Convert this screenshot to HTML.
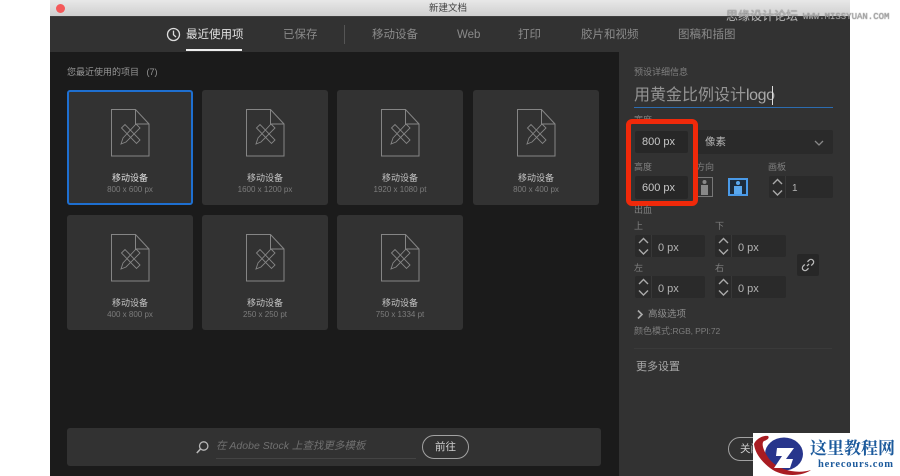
<!DOCTYPE html>
<html><head><meta charset="utf-8"><style>
html,body{margin:0;padding:0}
body{width:900px;height:476px;background:#fff;position:relative;overflow:hidden;font-family:"Liberation Sans","Noto Sans CJK SC",sans-serif}
div,span,svg{position:absolute;white-space:nowrap}
.t{line-height:1}
.card{width:126px;height:115px;background:#323232;border-radius:3px}
.card svg{left:44px;top:19px}
.card .a{left:0;width:126px;text-align:center;top:83px;font-size:9px;color:#c4c4c4;line-height:11px}
.card .b{left:0;width:126px;text-align:center;top:95px;font-size:8px;color:#7c7c7c;line-height:10px}
.tab{font-size:11.5px;color:#8a8a8a;top:28px;line-height:14px}
.lb{font-size:9px;color:#808080;line-height:10px}
.inp{background:#272727;border-radius:2px;height:23px}
.sp{height:22px;background:#2a2a2a;border-radius:2px;width:70px}
.sp .v{left:16px;top:0;width:1px;height:22px;background:#383838}
.sp .x{left:23px;top:2px;line-height:22px;font-size:11px;color:#b4b4b4}
.sp svg{left:3px;top:0}
</style></head><body>
<div style="left:50px;top:0;width:800px;height:476px;background:#1b1b1b"></div>
<div style="left:50px;top:0;width:800px;height:16px;background:linear-gradient(#e8e8e8,#cfcfcf)"></div>
<div style="left:56px;top:3.5px;width:9px;height:9px;border-radius:50%;background:#f4595a"></div>
<div class="t" style="left:429px;top:4px;font-size:9.5px;color:#444">新建文档</div>
<div style="left:50px;top:16px;width:800px;height:36px;background:#323232;border-top:1px solid #3e3e3e;box-sizing:border-box"></div>
<svg style="left:166px;top:27px" width="15" height="15" viewBox="0 0 15 15"><circle cx="7.5" cy="7.5" r="6" fill="none" stroke="#ddd" stroke-width="1.3"/><path d="M7.5 3.6V7.7L10 10" fill="none" stroke="#ddd" stroke-width="1.3"/></svg>
<div class="tab" style="left:186px;color:#e2e2e2">最近使用项</div>
<div style="left:186px;top:49px;width:56px;height:2px;background:#eee"></div>
<div class="tab" style="left:283px">已保存</div>
<div style="left:344px;top:25px;width:1px;height:19px;background:#555"></div>
<div class="tab" style="left:372px">移动设备</div>
<div class="tab" style="left:457px">Web</div>
<div class="tab" style="left:518px">打印</div>
<div class="tab" style="left:581px">胶片和视频</div>
<div class="tab" style="left:678px">图稿和插图</div>
<div class="t" style="left:67px;top:67.5px;font-size:9px;color:#969696">您最近使用的项目&nbsp;&nbsp; (7)</div>

<svg width="0" height="0" style="left:0;top:0"><defs><g id="d" fill="none" stroke="#858585" stroke-width="1"><path d="M.5.5H24.5L38 15V47H.5ZM24.5.5V15H38"/><path d="M10.5 19 14 15.5 29 31 25.5 34.5ZM25 15 29 19 15 33 10 35 12 29Z" stroke-width=".9"/></g></defs></svg>

<div class="card" style="left:67px;top:90px;box-sizing:border-box;border:2px solid #1e6fd0"><svg style="left:42px;top:17px" width="39" height="48"><use href="#d"/></svg><div class="a" style="left:-2px;top:81px;color:#e0e0e0">移动设备</div><div class="b" style="left:-2px;top:93px">800 x 600 px</div></div>
<div class="card" style="left:202px;top:90px"><svg width="39" height="48"><use href="#d"/></svg><div class="a">移动设备</div><div class="b">1600 x 1200 px</div></div>
<div class="card" style="left:337px;top:90px"><svg width="39" height="48"><use href="#d"/></svg><div class="a">移动设备</div><div class="b">1920 x 1080 pt</div></div>
<div class="card" style="left:473px;top:90px"><svg width="39" height="48"><use href="#d"/></svg><div class="a">移动设备</div><div class="b">800 x 400 px</div></div>
<div class="card" style="left:67px;top:215px"><svg width="39" height="48"><use href="#d"/></svg><div class="a">移动设备</div><div class="b">400 x 800 px</div></div>
<div class="card" style="left:202px;top:215px"><svg width="39" height="48"><use href="#d"/></svg><div class="a">移动设备</div><div class="b">250 x 250 pt</div></div>
<div class="card" style="left:337px;top:215px"><svg width="39" height="48"><use href="#d"/></svg><div class="a">移动设备</div><div class="b">750 x 1334 pt</div></div>

<div style="left:67px;top:428px;width:534px;height:38px;background:#323232;border-radius:3px"></div>
<svg style="left:195px;top:440px" width="15" height="15" viewBox="0 0 15 15"><circle cx="8.7" cy="6" r="4.2" fill="none" stroke="#b8b8b8" stroke-width="1.3"/><path d="M5.5 9 1.8 13" stroke="#b8b8b8" stroke-width="1.6"/></svg>
<div class="t" style="left:216px;top:441px;font-size:10.5px;color:#707070;font-style:italic">在 Adobe Stock 上查找更多模板</div>
<div style="left:216px;top:458px;width:200px;height:1px;background:#444"></div>
<div style="left:422px;top:435px;width:47px;height:24px;box-sizing:border-box;border:1px solid #a2a2a2;border-radius:12px;color:#cfcfcf;font-size:10.5px;line-height:22px;text-align:center">前往</div>

<div style="left:619px;top:52px;width:231px;height:424px;background:#323232"></div>
<div class="lb" style="left:634px;top:67px">预设详细信息</div>
<div class="t" style="left:634px;top:86px;font-size:16px;color:#949494;line-height:20px">用黄金比例设计<span style="position:static;color:#a8a8a8;letter-spacing:-.4px">logo</span></div>
<div style="left:772px;top:86px;width:1px;height:19px;background:#ddd"></div>
<div style="left:634px;top:107px;width:199px;height:1px;background:#2c6cb0"></div>
<div class="lb" style="left:634px;top:115px">宽度</div>
<div class="inp" style="left:635px;top:131px;width:53px;height:22px"></div>
<div class="t" style="left:642px;top:137px;font-size:11px;color:#c8c8c8">800 px</div>
<div class="inp" style="left:696px;top:130px;width:137px;height:24px;background:#2a2a2a"></div>
<div class="t" style="left:705px;top:137px;font-size:10.5px;color:#b4b4b4">像素</div>
<svg style="left:813px;top:139px" width="12" height="8"><path d="M2 2 6 6 10 2" fill="none" stroke="#888" stroke-width="1.3"/></svg>
<div class="lb" style="left:634px;top:162px">高度</div>
<div class="inp" style="left:635px;top:176px;width:53px"></div>
<div class="t" style="left:642px;top:183px;font-size:11px;color:#c8c8c8">600 px</div>
<div class="lb" style="left:696px;top:162px">方向</div>
<div style="left:697px;top:177px;width:16px;height:20px;box-sizing:border-box;border:1px solid #777"></div>
<svg style="left:699px;top:179px" width="11" height="16"><circle cx="5.5" cy="3" r="2" fill="#888"/><path d="M2 6H9V16H2Z" fill="#888"/></svg>
<div style="left:728px;top:178px;width:20px;height:18px;box-sizing:border-box;border:2px solid #4a9ae8;background:#1d2c3c"></div>
<svg style="left:732px;top:180px" width="12" height="15"><circle cx="6" cy="3" r="2" fill="#5aa8ee"/><path d="M2 6H10V14H2Z" fill="#5aa8ee"/></svg>
<div class="lb" style="left:768px;top:162px">画板</div>
<div class="sp" style="left:769px;top:176px;width:64px"><div class="v"></div><svg width="12" height="22"><path d="M1 8 5.5 3.5 10 8M1 14.5 5.5 19 10 14.5" fill="none" stroke="#aaa" stroke-width="1.4"/></svg><div class="x" style="font-size:10px">1</div></div>

<div style="left:626px;top:119px;width:72px;height:87px;box-sizing:border-box;border:5px solid #f0290a;border-radius:6px"></div>

<div class="lb" style="left:634px;top:205px">出血</div>
<div class="lb" style="left:634px;top:221px">上</div>
<div class="lb" style="left:715px;top:221px">下</div>
<div class="sp" style="left:635px;top:235px"><div class="v"></div><svg width="12" height="22"><path d="M1 8 5.5 3.5 10 8M1 14.5 5.5 19 10 14.5" fill="none" stroke="#aaa" stroke-width="1.4"/></svg><div class="x">0 px</div></div>
<div class="sp" style="left:715px;top:235px;width:71px"><div class="v"></div><svg width="12" height="22"><path d="M1 8 5.5 3.5 10 8M1 14.5 5.5 19 10 14.5" fill="none" stroke="#aaa" stroke-width="1.4"/></svg><div class="x">0 px</div></div>
<div class="lb" style="left:634px;top:263px">左</div>
<div class="lb" style="left:715px;top:263px">右</div>
<div class="sp" style="left:635px;top:276px"><div class="v"></div><svg width="12" height="22"><path d="M1 8 5.5 3.5 10 8M1 14.5 5.5 19 10 14.5" fill="none" stroke="#aaa" stroke-width="1.4"/></svg><div class="x">0 px</div></div>
<div class="sp" style="left:715px;top:276px;width:71px"><div class="v"></div><svg width="12" height="22"><path d="M1 8 5.5 3.5 10 8M1 14.5 5.5 19 10 14.5" fill="none" stroke="#aaa" stroke-width="1.4"/></svg><div class="x">0 px</div></div>
<div style="left:797px;top:254px;width:22px;height:22px;background:#272727;border-radius:2px"></div>
<svg style="left:801px;top:258px" width="14" height="14" viewBox="0 0 13 13"><path d="M5.5 7.5 7.5 5.5M6 3.5 7.5 2A2.1 2.1 0 0 1 11 5.5L9.5 7M7 9.5 5.5 11A2.1 2.1 0 0 1 2 7.5L3.5 6" fill="none" stroke="#bbb" stroke-width="1.2"/></svg>
<svg style="left:636px;top:309px" width="8" height="11"><path d="M2 1.5 6 5.5 2 9.5" fill="none" stroke="#aaa" stroke-width="1.6"/></svg>
<div class="t" style="left:648px;top:310px;font-size:9.5px;color:#8e8e8e">高级选项</div>
<div class="t" style="left:634px;top:326.5px;font-size:9px;color:#7c7c7c">颜色模式:<span style="position:static;font-size:8.5px;letter-spacing:-.1px">RGB, PPI:72</span></div>
<div style="left:634px;top:348px;width:198px;height:1px;background:#3a3a3a"></div>
<div class="t" style="left:636px;top:362px;font-size:11px;color:#a8a8a8">更多设置</div>
<div style="left:728px;top:437px;width:50px;height:24px;box-sizing:border-box;border:1px solid #a2a2a2;border-radius:12px;color:#cfcfcf;font-size:10.5px;line-height:22px;padding-left:11px">关闭</div>

<div class="t" style="left:726px;top:10px;font-size:12px;color:#b4b4b4;text-shadow:0 0 1px #444">思缘设计论坛</div>
<div class="t" style="left:803px;top:13px;font-size:9px;color:#a8a8a8;font-family:'Liberation Mono',monospace;text-shadow:0 0 1px #666">WWW.MISSYUAN.COM</div>

<div style="left:753px;top:433px;width:147px;height:43px;background:#fff"></div>
<svg style="left:753px;top:433px" width="60" height="43" viewBox="0 0 60 43"><ellipse cx="31" cy="21" rx="19" ry="16.5" fill="#27358c"/><path d="M1 11C3 6 10 2 15 3 17 5 14 7 11 8 8 10 10 18 17 27 27 38 45 41 58 37 50 43 30 45 17 35 8 28 2 20 1 11Z" fill="#a81c22"/><path d="M24 15H41L33 26H40L37 35H21L29 23H23Z" fill="#fff"/></svg>
<div class="t" style="left:810px;top:438px;font-size:17px;font-weight:bold;color:#1c5a9c;font-family:'Noto Serif CJK SC','Noto Sans CJK SC',serif">这里教程网</div>
<div class="t" style="left:818px;top:459.5px;font-size:10.5px;font-weight:bold;color:#1c5a9c;font-family:'Liberation Serif',serif;letter-spacing:.8px">herecours.com</div>
</body></html>
